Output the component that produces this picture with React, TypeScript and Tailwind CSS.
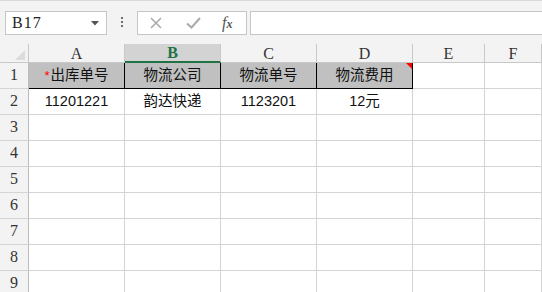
import React from 'react'

const COLS = ['A', 'B', 'C', 'D', 'E', 'F']
const ROWS = [1, 2, 3, 4, 5, 6, 7, 8, 9]

const HEAD = ['出库单号', '物流公司', '物流单号', '物流费用']
const DATA = ['11201221', '韵达快递', '1123201', '12元']

function Toolbar() {
  return (
    <div className="flex h-[44px] items-start border-t border-[#d9d9d9] bg-[#f3f3f3] pl-[5px] pt-[10px]">
      <div className="flex h-[24px] w-[102px] items-center justify-between border border-[#c6c6c6] bg-white pl-[6px] pr-[7px]">
        <span className="font-['Liberation_Serif',serif] text-[16px] tracking-[1px] text-[#222]">B17</span>
        <svg width="8" height="5" viewBox="0 0 8 5">
          <path d="M0 0h8L4 4.5z" fill="#555" />
        </svg>
      </div>
      <div className="ml-[14px] mt-[6px] flex w-[3px] flex-col gap-[2px]">
        <span className="h-[2px] w-[2px] bg-[#6d6d6d]" />
        <span className="h-[2px] w-[2px] bg-[#6d6d6d]" />
        <span className="h-[2px] w-[2px] bg-[#6d6d6d]" />
      </div>
      <div className="ml-[13px] flex h-[24px] w-[110px] items-center border border-[#c6c6c6] bg-white pl-[12px]">
        <svg width="12" height="12" viewBox="0 0 12 12">
          <path d="M1 1l10 10M11 1L1 11" stroke="#ababab" strokeWidth="1.6" />
        </svg>
        <svg className="ml-[24px]" width="15" height="12" viewBox="0 0 15 12">
          <path d="M1 6.5l4.5 4L14 1" stroke="#ababab" strokeWidth="2" fill="none" />
        </svg>
        <span className="ml-[21px] font-['Liberation_Serif',serif] text-[16px] italic text-[#555]">
          f<span className="text-[12px] font-bold">x</span>
        </span>
      </div>
      <div className="ml-[3px] h-[24px] flex-1 border-y border-l border-[#c6c6c6] bg-white" />
    </div>
  )
}

export default function App() {
  return (
    <div className="h-[292px] w-[542px] overflow-hidden bg-white font-['Liberation_Sans','Noto_Sans_CJK_SC',sans-serif]">
      <Toolbar />
      <div className="grid grid-cols-[29px_96px_96px_96px_96px_72px_1fr]">
        {/* corner */}
        <div className="flex h-[19px] items-end justify-end border-b border-r border-[#c8c8c8] bg-[#f3f3f3] pb-[2px] pr-[3px]">
          <svg width="10" height="10" viewBox="0 0 10 10">
            <path d="M10 0v10H0z" fill="#dcdcdc" />
          </svg>
        </div>
        {COLS.map((c) =>
          c === 'B' ? (
            <div
              key={c}
              className="flex h-[19px] items-center justify-center border-b-2 border-r border-b-[#217346] border-r-[#c8c8c8] bg-[#d3d3d3] pt-[1px] font-['Liberation_Serif',serif] text-[16px] font-bold text-[#217346]"
            >
              {c}
            </div>
          ) : (
            <div
              key={c}
              className="flex h-[19px] items-center justify-center border-b border-r border-[#c8c8c8] bg-[#f3f3f3] pt-[1px] font-['Liberation_Serif',serif] text-[16px] text-[#333]"
            >
              {c}
            </div>
          )
        )}

        {ROWS.map((r) => (
          <React.Fragment key={r}>
            <div className="flex h-[26px] items-end justify-center border-b border-r border-b-[#d4d4d4] border-r-[#bcbcbc] bg-[#f3f3f3] pb-[1px] font-['Liberation_Serif',serif] text-[16px] text-[#333]">
              {r}
            </div>
            {COLS.map((c, i) => {
              if (r === 1 && i < 4) {
                return (
                  <div
                    key={c}
                    className="relative flex h-[26px] items-center justify-center border-b border-r border-black bg-[#c0c0c0] text-[14.5px] text-[#111]"
                  >
                    {i === 0 && <span className="mr-[1px] text-[13px] text-[#ff0000]">*</span>}
                    {HEAD[i]}
                    {i === 3 && (
                      <svg className="absolute right-0 top-0" width="6" height="6" viewBox="0 0 6 6">
                        <path d="M0 0h6v6z" fill="#ff0000" />
                      </svg>
                    )}
                  </div>
                )
              }
              return (
                <div
                  key={c}
                  className="flex h-[26px] items-center justify-center border-b border-r border-[#d4d4d4] text-[14.5px] text-[#111]"
                >
                  {r === 2 && i < 4 ? DATA[i] : ''}
                </div>
              )
            })}
          </React.Fragment>
        ))}
      </div>
    </div>
  )
}
